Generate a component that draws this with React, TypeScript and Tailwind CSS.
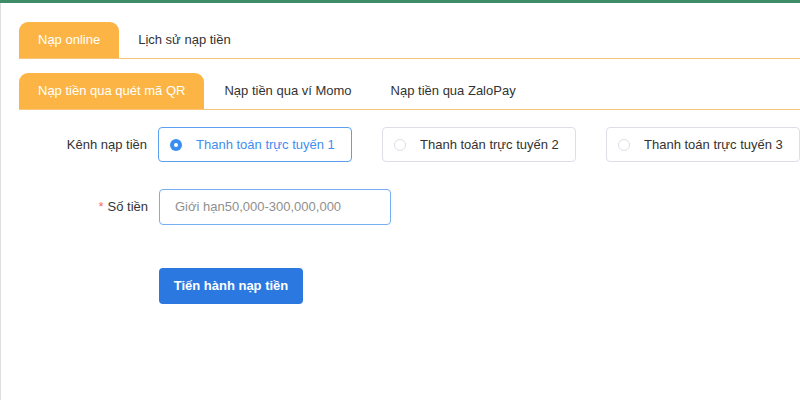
import React from "react";

export default function App() {
  const channels = ["Thanh toán trực tuyến 1", "Thanh toán trực tuyến 2", "Thanh toán trực tuyến 3"];
  return (
    <div className="w-[800px] h-[400px] bg-white overflow-hidden text-[13px] text-[#333]" style={{ fontFamily: '"Liberation Sans", Arial, sans-serif' }}>
      <div className="h-[3px] bg-[#3f8d68]" />
      <div className="h-[397px] border-l border-[#dedede] pl-[18px] pt-[19px]">
        {/* Top tabs */}
        <div className="flex h-[37px] border-b border-[#f9c57a]">
          <div className="px-[19px] flex items-center bg-[#fcb545] text-white rounded-t-[9px]">Nạp online</div>
          <div className="px-[19px] flex items-center">Lịch sử nạp tiền</div>
        </div>
        {/* Sub tabs */}
        <div className="flex h-[37px] mt-[14px] border-b border-[#f9c57a]">
          <div className="px-[19px] flex items-center bg-[#fcb545] text-white rounded-t-[9px]">Nạp tiền qua quét mã QR</div>
          <div className="px-[20px] flex items-center">Nạp tiền qua ví Momo</div>
          <div className="px-[19px] flex items-center">Nạp tiền qua ZaloPay</div>
        </div>
        {/* Channel row */}
        <div className="flex items-center mt-[17px]">
          <div className="w-[140px] pr-[11px] text-right">Kênh nạp tiền</div>
          <div className="flex gap-[30px]">
            {channels.map((c, i) => (
              <div
                key={c}
                className={
                  i === 0
                    ? "w-[194px] h-[35px] flex items-center pl-[11px] rounded-[4px] border border-[#5b9ff0] text-[#3f8ef0]"
                    : "w-[194px] h-[35px] flex items-center pl-[11px] rounded-[4px] border border-[#dcdfe6] text-[#333]"
                }
              >
                {i === 0 ? (
                  <span className="w-[12px] h-[12px] rounded-full bg-[#3a8ef0] flex items-center justify-center">
                    <span className="w-[4px] h-[4px] rounded-full bg-white" />
                  </span>
                ) : (
                  <span className="w-[12px] h-[12px] rounded-full border border-[#dcdfe6] bg-white" />
                )}
                <span className="ml-[14px]">{c}</span>
              </div>
            ))}
          </div>
        </div>
        {/* Amount row */}
        <div className="flex items-center mt-[27px]">
          <div className="w-[140px] pr-[11px] text-right">
            <span className="text-[#f56c6c] mr-[4px]">*</span>Số tiền
          </div>
          <div className="w-[232px] h-[36px] flex items-center px-[15px] rounded-[4px] border border-[#76aef2] text-[#8f8f8f]">
            Giới hạn50,000-300,000,000
          </div>
        </div>
        {/* Button */}
        <div className="flex mt-[43px]">
          <div className="w-[140px]" />
          <button className="w-[144px] h-[36px] rounded-[4px] bg-[#2a78e0] text-white font-bold text-[13px]">
            Tiến hành nạp tiền
          </button>
        </div>
      </div>
    </div>
  );
}
